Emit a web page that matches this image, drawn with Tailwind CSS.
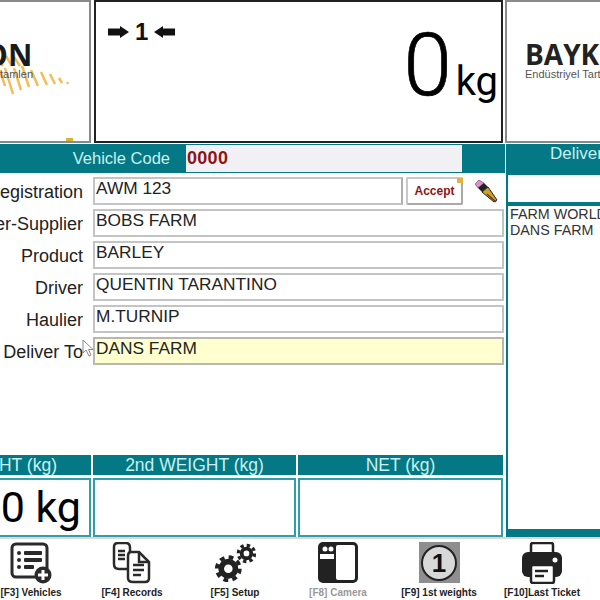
<!DOCTYPE html>
<html><head><script src="https://cdn.jsdelivr.net/npm/@tailwindcss/browser@4"></script></head>
<body class="bg-white">
<div class="w-[600px] h-[600px] overflow-hidden bg-white flex flex-col font-['Liberation_Sans',sans-serif] text-[#222]">
  <div class="flex h-[144px] shrink-0">
    <div class="w-[91px] h-[143px] border-r-2 border-t-2 border-b-2 border-[#8a8a8a] overflow-hidden flex justify-end relative">
      <svg class="absolute left-0 top-[52px]" width="72" height="44" viewBox="0 0 72 44" fill="none" stroke="#f4bd55" stroke-width="2.500"><path d="M0 8 3 12M6 2 12 12M14 3 20 12M0 16 5 32M5 14 13 40M14 14 21 36M22 12 29 33M31 16 38 32M41 18 47 31M50 20 55 30M59 24 62 29M67 28 68 30"/></svg>
      <div class="absolute top-[38px] left-[-16px] font-['Open_Sans',sans-serif] font-bold text-[30px] leading-none text-[#1a1a1a]">ON</div>
      <div class="absolute top-[67px] left-0 text-[11px] leading-none text-[#555]">tamlen</div>
      <div class="absolute left-[66px] top-[136px] w-[7px] h-[5px] bg-[#d9b23a]"></div>
    </div>
    <div class="ml-[3px] w-[409px] h-[143px] border-2 border-[#222] relative">
      <div class="absolute left-[12px] top-[18px] flex items-center gap-[6px]">
        <svg width="21" height="12" viewBox="0 0 21 12"><path d="M0 2.500H12V0L21 6 12 12V9.500H0Z" fill="#111"/></svg>
        <span class="text-[24px] font-bold leading-none text-[#111]">1</span>
        <svg width="21" height="12" viewBox="0 0 21 12"><path d="M21 2.500H9V0L0 6 9 12V9.500H21Z" fill="#111"/></svg>
      </div>
      <div class="absolute right-[3px] top-[20px] flex items-baseline font-['Roboto',sans-serif] text-black leading-none">
        <span class="text-[87px] font-light [-webkit-text-stroke:0.7px_black]">0</span><span class="text-[40px] ml-[4px]">kg</span>
      </div>
    </div>
    <div class="ml-[2px] grow h-[143px] border-l-2 border-t-2 border-b-2 border-[#8a8a8a] relative overflow-hidden">
      <div class="absolute left-[18px] top-[38px] font-['Open_Sans',sans-serif] font-bold text-[28px] leading-none text-[#222] whitespace-nowrap">BAYK</div>
      <div class="absolute left-[18px] top-[67px] text-[11px] leading-none text-[#555] whitespace-nowrap">Endüstriyel Tartım</div>
    </div>
  </div>
  <div class="flex grow">
    <div class="w-[505px] shrink-0 flex flex-col">
      <div class="h-[29px] bg-[#047884] flex items-center text-[#c8f0f0] text-[16.500px]">
        <div class="w-[186px] text-right pr-[16px] whitespace-nowrap">Vehicle Code</div>
        <div class="w-[276px] h-[27px] bg-[#f1f0f4] text-[#8e1414] font-bold text-[18px] leading-[26px] pl-[1px] tracking-[0.3px]">0000</div>
      </div>
      <div class="mt-[4px] flex flex-col gap-[4px] grow">
        <div class="h-[28px] flex">
          <div class="w-[83px] text-right text-[18px] leading-[30px] whitespace-nowrap flex justify-end">egistration</div>
          <div class="ml-[10px] w-[310px] border-2 border-[#c4c4c4] border-r-[#b0b0b0] text-[17.300px] leading-[18px] pl-[1px]">AWM 123</div>
          <div class="ml-[3px] w-[57px] h-[28px] border-2 border-[#c8c8c8] border-r-[#aaa] border-b-[#aaa] rounded-[2px] relative flex items-center justify-center text-[#8e1414] font-bold text-[12px]">Accept
            <div class="absolute right-[-2px] top-[-1px] w-[6px] h-[5px] bg-[#e3b23f]"></div>
          </div>
          <svg class="ml-[11px] mt-[2px]" width="25" height="25" viewBox="0 0 25 25"><path d="M1 5 5 1 10 4 4 9Z" fill="#e08ad8" stroke="#333" stroke-width="0.500"/><path d="M4 9 10 4 14 8 8 13Z" fill="#222"/><path d="M8 13 14 8 23 21 20 23Z" fill="#c9a227" stroke="#222" stroke-width="1"/><path d="M13 15 22 23" stroke="#7a3a12" stroke-width="1.500"/></svg>
        </div>
        <div class="h-[28px] flex">
          <div class="w-[83px] text-right text-[18px] leading-[31px] whitespace-nowrap flex justify-end">er-Supplier</div>
          <div class="ml-[10px] w-[411px] border-2 border-[#c4c4c4] text-[17.300px] leading-[18px] pl-[1px]">BOBS FARM</div>
        </div>
        <div class="h-[28px] flex">
          <div class="w-[83px] text-right text-[18px] leading-[31px]">Product</div>
          <div class="ml-[10px] w-[411px] border-2 border-[#c4c4c4] text-[17.300px] leading-[18px] pl-[1px]">BARLEY</div>
        </div>
        <div class="h-[28px] flex">
          <div class="w-[83px] text-right text-[18px] leading-[31px]">Driver</div>
          <div class="ml-[10px] w-[411px] border-2 border-[#c4c4c4] text-[17.300px] leading-[18px] pl-[1px]">QUENTIN TARANTINO</div>
        </div>
        <div class="h-[28px] flex">
          <div class="w-[83px] text-right text-[18px] leading-[31px]">Haulier</div>
          <div class="ml-[10px] w-[411px] border-2 border-[#c4c4c4] text-[17.300px] leading-[18px] pl-[1px]">M.TURNIP</div>
        </div>
        <div class="h-[28px] flex relative">
          <div class="w-[83px] text-right text-[18px] leading-[31px] whitespace-nowrap flex justify-end">Deliver To</div>
          <div class="ml-[10px] w-[411px] border-2 border-[#b8b8b0] bg-[#ffffd0] text-[17.300px] leading-[18px] pl-[1px]">DANS FARM</div>
          <svg class="absolute left-[82px] top-[2px]" width="12" height="18" viewBox="0 0 12 18"><path d="M1 1V14L4 11 7 17 9 16 6.500 10.500H11Z" fill="#fff" stroke="#888" stroke-width="1"/></svg>
        </div>
      </div>
      <div class="flex gap-[2px] h-[20px] w-[503px] bg-white text-[17.500px] text-[#c8f0f0] leading-[20px] text-center">
        <div class="w-[91px] bg-[#047884] whitespace-nowrap flex justify-end pr-[34px]">HT (kg)</div>
        <div class="w-[203px] bg-[#047884] whitespace-nowrap">2nd WEIGHT (kg)</div>
        <div class="w-[205px] bg-[#047884]">NET (kg)</div>
      </div>
      <div class="flex gap-[2px] mt-[3px] h-[59px] w-[503px]">
        <div class="w-[91px] border-y-2 border-r-2 border-[#2f9ea6] flex justify-end pr-[8px] items-center text-[43px] leading-none text-black font-['Roboto',sans-serif] whitespace-nowrap">0 kg</div>
        <div class="w-[203px] border-2 border-[#2f9ea6]"></div>
        <div class="w-[205px] border-2 border-[#2f9ea6]"></div>
      </div>
    </div>
    <div class="ml-[1px] grow flex flex-col bg-[#047884] border-l-2 border-[#047884] pb-[8px]">
      <div class="h-[31px] text-[#c8f0f0] text-[17px] whitespace-nowrap pl-[42px] leading-[20px]">Deliver</div>
      <div class="h-[27px] bg-white"></div>
      <div class="mt-[4px] grow bg-white text-[14.300px] leading-[16px] pl-[2px] text-[#333] whitespace-nowrap">FARM WORLD<br>DANS FARM</div>
    </div>
  </div>
  <div class="h-[2px] bg-[#d8d8d8] shrink-0"></div>
  <div class="h-[61px] shrink-0 relative text-[#222] text-[10px] font-bold leading-none">
    <div class="absolute left-[0px] top-[3px] w-[62px] text-center flex flex-col items-center whitespace-nowrap">
      <svg width="42" height="42" viewBox="0 0 42 42" fill="none"><rect x="2" y="2" width="35" height="33" rx="4" stroke="#2a2a2a" stroke-width="3"/><g fill="#2a2a2a"><circle cx="9" cy="11" r="2"/><rect x="14" y="9" width="18" height="4" rx="1"/><circle cx="9" cy="18" r="2"/><rect x="14" y="16" width="18" height="4" rx="1"/><circle cx="9" cy="25" r="2"/><rect x="14" y="23" width="10" height="4" rx="1"/></g><circle cx="33" cy="33" r="8.500" fill="#2a2a2a"/><path d="M33 28V38M28 33H38" stroke="#fff" stroke-width="3"/></svg>
      <span class="mt-[4px]">[F3] Vehicles</span>
    </div>
    <div class="absolute left-[102px] top-[3px] w-[60px] text-center flex flex-col items-center whitespace-nowrap">
      <svg width="42" height="42" viewBox="0 0 42 42" fill="none" stroke="#2a2a2a" stroke-width="2.500"><path d="M17 27H8Q3 27 3 22V5Q3 1 7 1H15Q19 1 19 6V10"/><path d="M18 10H28L38 20V36Q38 40 34 40H22Q17 40 17 36V14Q17 10 20 10Z" fill="#fff"/><path d="M28 10V20H38" /><path d="M7 9H14M7 13H14M7 17H14M22 23H33M22 28H33M22 33H30"/></svg>
      <span class="mt-[4px]">[F4] Records</span>
    </div>
    <div class="absolute left-[205px] top-[3px] w-[60px] text-center flex flex-col items-center whitespace-nowrap">
      <svg width="42" height="42" viewBox="0 0 44 42" fill="none"><circle cx="15" cy="27" r="7.500" stroke="#222" stroke-width="6"/><circle cx="15" cy="27" r="12" stroke="#222" stroke-width="4" stroke-dasharray="5 4.420"/><circle cx="34" cy="11" r="5" stroke="#222" stroke-width="4"/><circle cx="34" cy="11" r="8.500" stroke="#222" stroke-width="3.500" stroke-dasharray="3.500 3.180"/></svg>
      <span class="mt-[4px]">[F5] Setup</span>
    </div>
    <div class="absolute left-[308px] top-[3px] w-[60px] text-center flex flex-col items-center whitespace-nowrap text-[#999]">
      <svg width="42" height="42" viewBox="0 0 42 42"><rect x="1" y="0" width="40" height="41" rx="5" fill="#222"/><rect x="19" y="3" width="19" height="35" rx="2" fill="#fff"/><circle cx="8" cy="7" r="2.500" fill="#fff"/><circle cx="14" cy="7" r="2.500" fill="#fff"/><rect x="3" y="12" width="14" height="5" fill="#fff"/></svg>
      <span class="mt-[4px]">[F8] Camera</span>
    </div>
    <div class="absolute left-[409px] top-[3px] w-[60px] text-center flex flex-col items-center whitespace-nowrap">
      <div class="w-[41px] h-[41px] bg-[#8e8e8e] flex items-center justify-center"><div class="w-[36px] h-[36px] rounded-full bg-[#d8d8d8] border-2 border-[#222] flex items-center justify-center text-[26px] text-[#111]">1</div></div>
      <span class="mt-[5px]">[F9] 1st weights</span>
    </div>
    <div class="absolute left-[512px] top-[3px] w-[60px] text-center flex flex-col items-center whitespace-nowrap">
      <svg width="42" height="42" viewBox="0 0 42 42"><path d="M10 10V3Q10 1 12 1H30Q32 1 32 3V10" fill="none" stroke="#222" stroke-width="2.500"/><rect x="1" y="10" width="40" height="25" rx="6" fill="#222"/><circle cx="34" cy="18" r="2.500" fill="#fff"/><rect x="10" y="23" width="23" height="18" rx="2" fill="#fff" stroke="#222" stroke-width="2.500"/><path d="M14 29H27M14 34H23" stroke="#222" stroke-width="2.500"/></svg>
      <span class="mt-[4px]">[F10]Last Ticket</span>
    </div>
  </div>
</div>
</body></html>
